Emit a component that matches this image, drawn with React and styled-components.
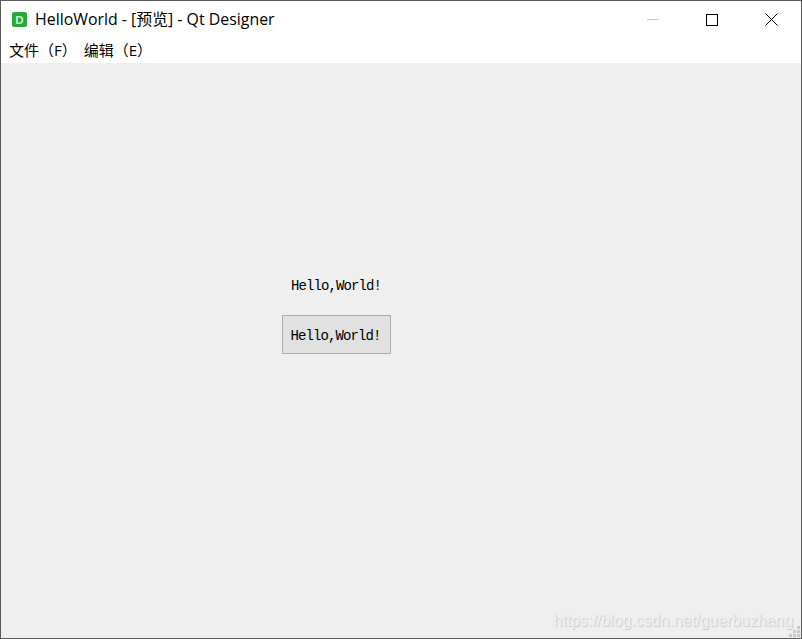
import React from "react";
import styled, { createGlobalStyle } from "styled-components";

const Global = createGlobalStyle`
  html, body { margin: 0; padding: 0; background: #efefef; }
  #root { width: 802px; height: 639px; }
  * { box-sizing: border-box; }
`;

const Window = styled.div`
  width: 802px;
  height: 639px;
  border: 1px solid #5a5a5a;
  background: #efefef;
  display: flex;
  flex-direction: column;
  position: relative;
  overflow: hidden;
  font-family: "Open Sans", "Noto Sans CJK SC", sans-serif;
  color: #000;
`;

const TitleBar = styled.div`
  height: 37px;
  background: #fff;
  display: flex;
  align-items: center;
  padding-left: 10px;
  flex: none;
`;

const AppIcon = styled.svg`
  width: 17px;
  height: 17px;
  flex: none;
  margin-right: 7px;
`;

const Title = styled.div`
  font-size: 15.9px;
  line-height: 20px;
  flex: 1;
  white-space: nowrap;
  margin-top: -1px;
`;

const WindowButtons = styled.div`
  display: flex;
  align-items: center;
  height: 100%;
`;

const WindowButton = styled.div`
  width: 59px;
  height: 100%;
  display: flex;
  align-items: center;
  justify-content: center;
  padding-right: 1px;
`;

const MenuBar = styled.div`
  height: 25px;
  background: #fff;
  display: flex;
  align-items: flex-start;
  flex: none;
  padding-left: 8px;
  gap: 7px;
`;

const MenuItem = styled.div`
  font-size: 15px;
  line-height: 24px;
  white-space: nowrap;
`;

const Content = styled.div`
  flex: 1;
  background: #efefef;
  padding: 213px 0 0 281px;
`;

const WidgetColumn = styled.div`
  width: 109px;
  display: flex;
  flex-direction: column;
  align-items: center;
  gap: 19px;
`;

const monoText = `
  font-family: "Liberation Mono", "Noto Sans CJK SC", monospace;
  font-size: 14px;
  letter-spacing: -0.9px;
  color: #000;
`;

const Label = styled.div`
  ${monoText}
  line-height: 20px;
  white-space: nowrap;
  margin-left: -1px;
`;

const PushButton = styled.button`
  ${monoText}
  width: 109px;
  height: 39px;
  padding: 2px 2px 0 0;
  background: #e1e1e1;
  border: 1px solid #adadad;
  border-radius: 0;
`;

const Watermark = styled.div`
  position: absolute;
  right: 8px;
  bottom: 7px;
  font-family: "Liberation Sans", sans-serif;
  font-size: 15.9px;
  line-height: 20px;
  color: #efefef;
  text-shadow: 1px 1px 1px #c8c8c8;
  white-space: nowrap;
`;

const SizeGrip = styled.svg`
  position: absolute;
  right: 1px;
  bottom: 1px;
  width: 11px;
  height: 11px;
`;

export default function App() {
  return (
    <Window>
      <Global />
      <TitleBar>
        <AppIcon viewBox="0 0 17 17">
          <rect x="1" y="1" width="15" height="15" rx="2" fill="#27a93c" />
          <text x="8.5" y="13" textAnchor="middle" fontFamily="Liberation Sans" fontSize="11.5" fontWeight="700" fill="#cdf3c8">D</text>
        </AppIcon>
        <Title>HelloWorld - [预览] - Qt Designer</Title>
        <WindowButtons>
          <WindowButton>
            <svg width="12" height="12" viewBox="0 0 12 12"><path d="M0 5.5H12" stroke="#c6c6c6" fill="none" /></svg>
          </WindowButton>
          <WindowButton>
            <svg width="12" height="12" viewBox="0 0 12 12"><rect x="0.5" y="0.5" width="11" height="11" stroke="#000" fill="none" /></svg>
          </WindowButton>
          <WindowButton>
            <svg width="13" height="13" viewBox="0 0 13 13"><path d="M0.5 0.5L12.5 12.5M12.5 0.5L0.5 12.5" stroke="#000" fill="none" /></svg>
          </WindowButton>
        </WindowButtons>
      </TitleBar>
      <MenuBar>
        <MenuItem>文件（F）</MenuItem>
        <MenuItem>编辑（E）</MenuItem>
      </MenuBar>
      <Content>
        <WidgetColumn>
          <Label>Hello,World!</Label>
          <PushButton>Hello,World!</PushButton>
        </WidgetColumn>
      </Content>
      <Watermark>https://blog.csdn.net/guerbuzhang</Watermark>
      <SizeGrip viewBox="0 0 11 11">
        <path d="M8 0h3v3H8zM4 4h3v3H4zM8 4h3v3H8zM0 8h3v3H0zM4 8h3v3H4zM8 8h3v3H8z" fill="#c9c9c9" />
      </SizeGrip>
    </Window>
  );
}
